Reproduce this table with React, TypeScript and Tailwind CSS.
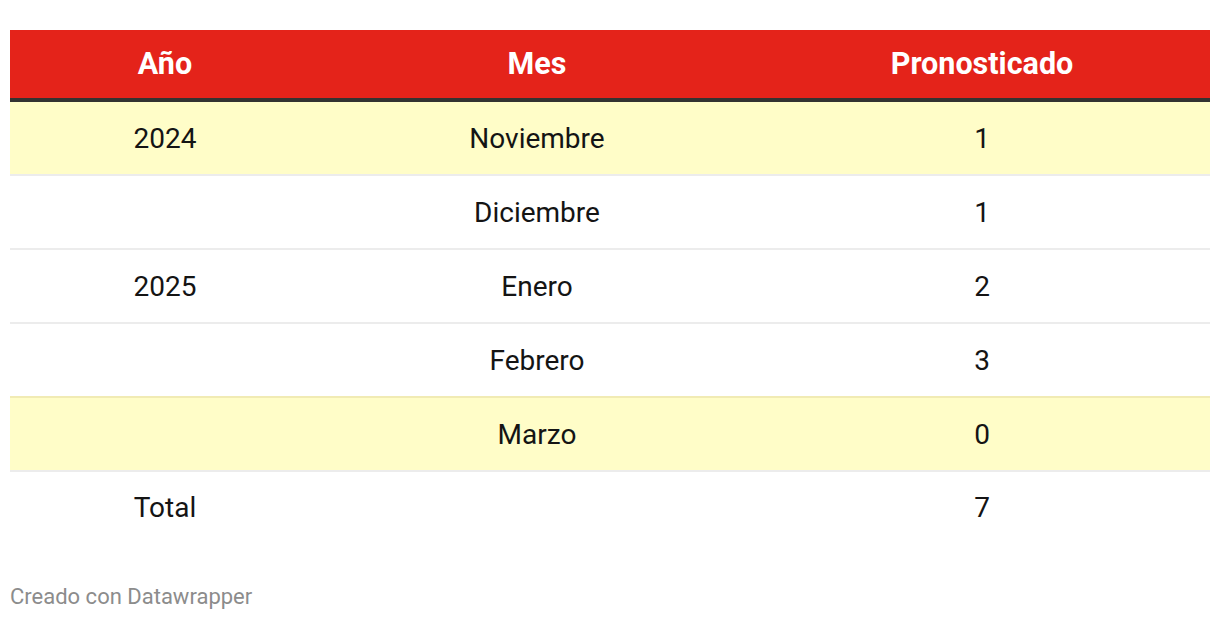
import React from "react";

type Row = { year: string; month: string; value: string; hl?: boolean; border: string };

const rows: Row[] = [
  { year: "2024", month: "Noviembre", value: "1", hl: true, border: "pt-[2px] border-b-2 border-[#ececec]" },
  { year: "", month: "Diciembre", value: "1", border: "pt-[2px] border-b-2 border-[#ececec]" },
  { year: "2025", month: "Enero", value: "2", border: "pt-[2px] border-b-2 border-[#ececec]" },
  { year: "", month: "Febrero", value: "3", border: "pt-[2px] border-b-2 border-[#f1ebb4]" },
  { year: "", month: "Marzo", value: "0", hl: true, border: "pt-[2px] border-b-2 border-[#ececec]" },
  { year: "Total", month: "", value: "7", border: "pb-[2px]" },
];

export default function App() {
  return (
    <div
      className="w-[1220px] h-[620px] bg-white px-[10px] pt-[30px]"
      style={{ fontFamily: "Roboto, 'Liberation Sans', sans-serif" }}
    >
      <div className="w-[1200px]">
        <div className="grid grid-cols-[310px_434px_456px] h-[72px] bg-[#e4231a] border-b-4 border-[#333331] text-white font-bold text-[30.5px] leading-none items-center">
          <div className="text-center">Año</div>
          <div className="text-center">Mes</div>
          <div className="text-center">Pronosticado</div>
        </div>
        {rows.map((r, i) => (
          <div
            key={i}
            className={`grid grid-cols-[310px_434px_456px] h-[74px] items-center text-[28px] leading-none text-[#141414] ${r.hl ? "bg-[#fffdc8]" : "bg-white"} ${r.border}`}
          >
            <div className="text-center">{r.year}</div>
            <div className="text-center">{r.month}</div>
            <div className="text-center">{r.value}</div>
          </div>
        ))}
        <div className="mt-[38px] text-[22px] leading-[26px] text-[#8c8c8c]">Creado con Datawrapper</div>
      </div>
    </div>
  );
}
